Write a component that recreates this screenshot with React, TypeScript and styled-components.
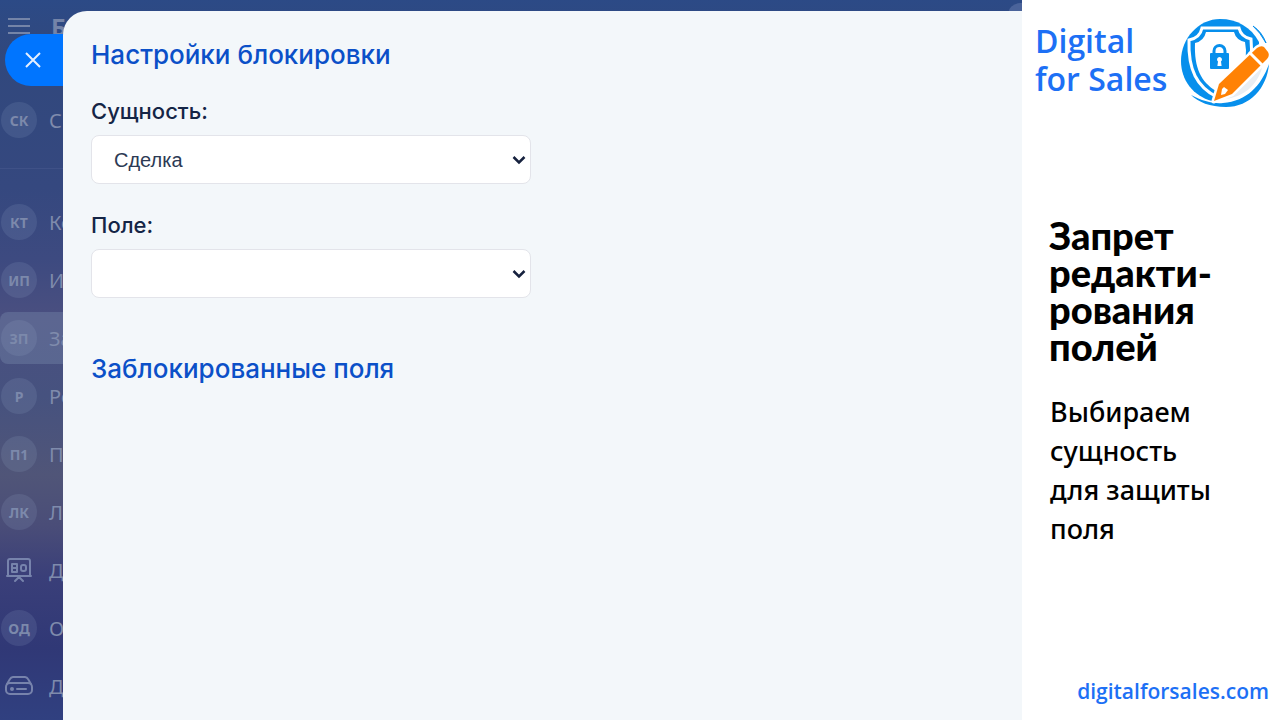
import React from "react";
import styled, { createGlobalStyle } from "styled-components";

const GlobalStyle = createGlobalStyle`
  *, *::before, *::after { box-sizing: border-box; }
  body { margin: 0; background: #fff; font-family: Inter, "Liberation Sans", sans-serif; }
  h1, h2, p { margin: 0; }
`;

const Page = styled.div`
  display: grid;
  grid-template-columns: minmax(0, 1fr) 258px;
  min-height: 100vh;
`;

const Workspace = styled.div`
  position: relative;
  display: grid;
  grid-template-columns: 63px minmax(0, 1fr);
  overflow: hidden;
  background: linear-gradient(
    180deg,
    #2c4a86 0%,
    #31487d 8%,
    #35487f 26%,
    #3d4a80 36%,
    #4a4f80 44%,
    #46527f 55%,
    #505578 66%,
    #4a4d78 73%,
    #3a3f79 80%,
    #303876 90%,
    #304080 100%
  );
`;

const Sidebar = styled.nav`
  display: flex;
  flex-direction: column;
  font-family: "Noto Sans", "Open Sans", sans-serif;
  color: #7f8bac;
`;

const Brand = styled.div`
  display: flex;
  align-items: center;
  gap: 21px;
  height: 52px;
  padding-left: 8px;
  font-size: 24px;
  font-weight: 700;
  color: #7484a8;

  svg {
    flex: none;
  }
`;

const NavList = styled.ul`
  display: flex;
  flex-direction: column;
  gap: 6px;
  margin: 0;
  padding: 0;
  list-style: none;
`;

const FirstGroup = styled(NavList)`
  margin-top: 42px;
  padding-bottom: 22px;
  border-bottom: 1px solid #3f5187;
`;

const SecondGroup = styled(NavList)`
  margin-top: 27px;
`;

const NavLink = styled.a<{ $active?: boolean }>`
  display: flex;
  align-items: center;
  gap: 12px;
  height: 52px;
  padding-left: 1px;
  border-radius: 8px 0 0 8px;
  background: ${(p) => (p.$active ? "rgba(150, 175, 200, 0.24)" : "transparent")};
  color: inherit;
  font-size: 20px;
  text-decoration: none;
  white-space: nowrap;
`;

const Mark = styled.span<{ $filled?: boolean }>`
  display: flex;
  flex: none;
  align-items: center;
  justify-content: center;
  width: 36px;
  height: 36px;
  border-radius: 50%;
  background: ${(p) => (p.$filled ? "rgba(160, 185, 210, 0.14)" : "transparent")};
  color: ${(p) => (p.$filled ? "#7c89ab" : "#7783ac")};
  font-size: 14px;
  font-weight: 700;
`;

const CloseButton = styled.button`
  position: absolute;
  top: 34px;
  left: 5px;
  display: flex;
  align-items: center;
  width: 60px;
  height: 52px;
  padding: 0 0 0 19px;
  border: 0;
  border-radius: 26px 0 0 26px;
  background: #0075ff;
  color: #e4efff;
  cursor: pointer;
`;

const Corner = styled.span`
  position: absolute;
  top: 3px;
  right: 0;
  width: 14px;
  height: 12px;
  border-radius: 12px 0 0 0;
  background: #4a639a;
`;

const Panel = styled.main`
  position: relative;
  margin-top: 11px;
  padding: 28px;
  border-radius: 24px 0 0 0;
  background: #f3f7fa;
`;

const Title = styled.h2`
  color: #0b50c8;
  font-size: 26px;
  font-weight: 500;
  line-height: 32px;
`;

const Form = styled.form`
  display: flex;
  flex-direction: column;
  gap: 27px;
  max-width: 440px;
  margin: 26px 0 55px;
`;

const Field = styled.div`
  display: flex;
  flex-direction: column;
  gap: 10px;
`;

const Label = styled.label`
  color: #142546;
  font-size: 22px;
  font-weight: 500;
  line-height: 28px;
`;

const SelectBox = styled.div`
  position: relative;
`;

const Select = styled.select`
  display: block;
  width: 100%;
  height: 49px;
  padding: 0 36px 0 22px;
  border: 1px solid #e3e4ea;
  border-radius: 8px;
  background: #fff;
  color: #2c3a54;
  font-family: "Liberation Sans", Arial, sans-serif;
  font-size: 20px;
  appearance: none;
`;

const Chevron = styled.svg`
  position: absolute;
  top: 20px;
  right: 5px;
  pointer-events: none;
`;

const Promo = styled.aside`
  display: flex;
  flex-direction: column;
  padding: 18px 11px 15px 13px;
  background: #fff;
  color: #000;
  font-family: "Noto Sans", "Open Sans", sans-serif;
`;

const PromoHeader = styled.header`
  display: flex;
  justify-content: space-between;
`;

const PromoName = styled.p`
  padding-top: 4px;
  color: #1d70f5;
  font-family: "Open Sans", sans-serif;
  font-size: 32px;
  font-weight: 600;
  line-height: 38px;
  white-space: nowrap;
`;

const Headline = styled.h1`
  margin: 109px 0 0 14px;
  font-family: Lato, "Open Sans", sans-serif;
  font-size: 38px;
  font-weight: 900;
  line-height: 37px;
  white-space: nowrap;
`;

const Lead = styled.p`
  margin: 27px 0 0 15px;
  font-size: 27px;
  font-weight: 500;
  line-height: 39px;
  white-space: nowrap;
`;

const SiteLink = styled.a`
  align-self: flex-end;
  margin-top: auto;
  color: #1d70f5;
  font-family: "Open Sans", sans-serif;
  font-size: 21px;
  font-weight: 600;
  line-height: 28px;
  text-decoration: none;
`;

const MenuIcon = () => (
  <svg width="22" height="18" viewBox="0 0 22 18" fill="none" stroke="currentColor" strokeWidth="2" aria-hidden="true">
    <path d="M0 2h22M0 9h22M0 16h22" />
  </svg>
);

const BoardIcon = () => (
  <svg width="28" height="26" viewBox="0 0 28 26" fill="none" stroke="currentColor" strokeWidth="2" strokeLinecap="round" strokeLinejoin="round" aria-hidden="true">
    <path d="M3 18V4a2 2 0 0 1 2-2h18a2 2 0 0 1 2 2v14M2 19h24M10 24l4-4 4 4" />
    <path d="M7 7h5v8H7zM7 11h5" />
    <rect x="16" y="8" width="5" height="6" rx="2" />
  </svg>
);

const DriveIcon = () => (
  <svg width="28" height="22" viewBox="0 0 28 22" fill="none" stroke="currentColor" strokeWidth="2" strokeLinecap="round" strokeLinejoin="round" aria-hidden="true">
    <path d="M2 9l3-5a4 4 0 0 1 3-2h12a4 4 0 0 1 3 2l3 5" />
    <rect x="1" y="8" width="26" height="11" rx="4" />
    <path d="M12 14h9" />
    <circle cx="7" cy="14" r="1" />
  </svg>
);

const Logo = () => (
  <svg width="90" height="90" viewBox="0 0 90 90" role="img" aria-label="Digital for Sales">
    <path d="M41 1C58 1 72 9 80 24L80 34L42 80L33 83C14 78 2 62 2 43C2 20 20 1 41 1Z" fill="#078fec" />
    <path d="M74 8Q83 14 87 25Q81 14 74 8Z" fill="#078fec" stroke="#078fec" />
    <path d="M90 46C88 70 71 89 47 89C31 89 19 84 12 77C23 83 35 86 44 85C68 83 82 68 90 46Z" fill="#078fec" />
    <path d="M83 50C78 67 65 79 46 81L74 54Z" fill="#e9eef3" />
    <path d="M23 10H60Q62 19 72 21Q74 42 68 53Q58 70 38 79C18 69 9 52 10 22Q21 20 23 10Z" fill="#078fec" stroke="#fff" strokeWidth="3" />
    <path d="M27 14H55Q57 22 66 24Q69 40 63 51Q54 64 37 73C22 64 15 50 16 25Q25 23 27 14Z" fill="#fff" />
    <path d="M35 36V33a5.500 5.500 0 0 1 11 0V36" fill="none" stroke="#078fec" strokeWidth="3" />
    <rect x="31" y="35" width="19" height="16" rx="1" fill="#078fec" />
    <path d="M40.500 39a2.500 2.500 0 0 1 1.500 4.500l.6 4.500h-4.200l.6-4.500A2.500 2.500 0 0 1 40.500 39Z" fill="#fff" />
    <path d="M35 83L40 66L78 30Q82 27 85 29L89 34Q91 38 88 41L53 76Z" fill="#ff8205" stroke="#fff" strokeWidth="5" strokeLinejoin="round" />
    <path d="M35 83L40 66L78 30Q82 27 85 29L89 34Q91 38 88 41L53 76Z" fill="#ff8205" />
    <path d="M70 34L84 48" stroke="#fff" strokeWidth="3" />
    <path d="M42 77L43 71L45 69L49 72L46 76Z" fill="#fff" />
  </svg>
);

type Item = { label: string; mark?: string; icon?: React.ReactNode; active?: boolean };

const items: Item[] = [
  { mark: "КТ", label: "Ко" },
  { mark: "ИП", label: "И" },
  { mark: "ЗП", label: "За", active: true },
  { mark: "Р", label: "Ро" },
  { mark: "П1", label: "П" },
  { mark: "ЛК", label: "Л" },
  { icon: <BoardIcon />, label: "Д" },
  { mark: "ОД", label: "О" },
  { icon: <DriveIcon />, label: "Д" },
];

const NavItem = ({ item }: { item: Item }) => (
  <li>
    <NavLink href="#" $active={item.active}>
      <Mark $filled={!!item.mark}>{item.mark ?? item.icon}</Mark>
      {item.label}
    </NavLink>
  </li>
);

const SelectField = ({ id, label, options }: { id: string; label: string; options: string[] }) => (
  <Field>
    <Label htmlFor={id}>{label}</Label>
    <SelectBox>
      <Select id={id}>
        {options.map((o) => (
          <option key={o}>{o}</option>
        ))}
      </Select>
      <Chevron width="14" height="10" viewBox="0 0 14 10" fill="none" stroke="#16213e" strokeWidth="2.500" aria-hidden="true">
        <path d="M1.500 2L7 7.500L12.500 2" />
      </Chevron>
    </SelectBox>
  </Field>
);

export default function App() {
  return (
    <>
      <GlobalStyle />
      <Page>
        <Workspace>
          <Sidebar>
            <Brand>
              <MenuIcon />
              Б
            </Brand>
            <FirstGroup>
              <NavItem item={{ mark: "СК", label: "С" }} />
            </FirstGroup>
            <SecondGroup>
              {items.map((item, i) => (
                <NavItem key={i} item={item} />
              ))}
            </SecondGroup>
          </Sidebar>
          <Corner />
          <CloseButton type="button" aria-label="Закрыть">
            <svg width="18" height="18" viewBox="0 0 18 18" fill="none" stroke="currentColor" strokeWidth="2" aria-hidden="true">
              <path d="M2 2L16 16M16 2L2 16" />
            </svg>
          </CloseButton>
          <Panel>
            <Title>Настройки блокировки</Title>
            <Form>
              <SelectField id="entity" label="Сущность:" options={["Сделка"]} />
              <SelectField id="field" label="Поле:" options={[""]} />
            </Form>
            <Title>Заблокированные поля</Title>
          </Panel>
        </Workspace>
        <Promo>
          <PromoHeader>
            <PromoName>
              Digital
              <br />
              for Sales
            </PromoName>
            <Logo />
          </PromoHeader>
          <Headline>
            Запрет
            <br />
            редакти-
            <br />
            рования
            <br />
            полей
          </Headline>
          <Lead>
            Выбираем
            <br />
            сущность
            <br />
            для защиты
            <br />
            поля
          </Lead>
          <SiteLink href="#">digitalforsales.com</SiteLink>
        </Promo>
      </Page>
    </>
  );
}
